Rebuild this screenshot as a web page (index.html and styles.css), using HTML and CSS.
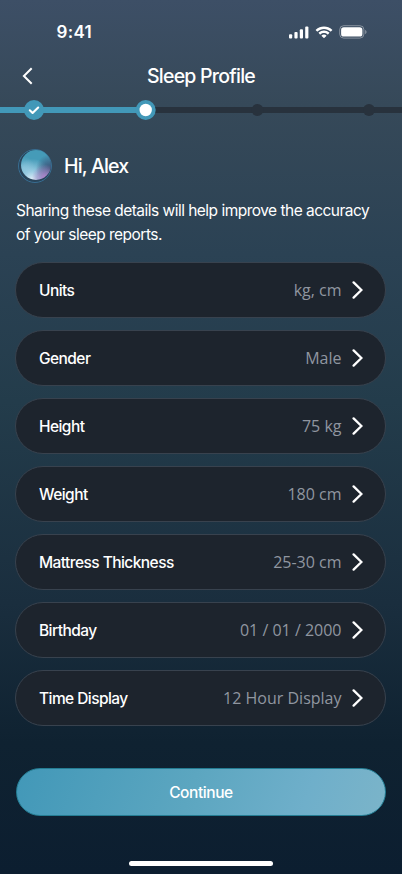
FILE: index.html
```
<!DOCTYPE html>
<html lang="en">
<head>
<meta charset="utf-8">
<meta name="viewport" content="width=device-width, initial-scale=1">
<title>Sleep Profile</title>
<link rel="stylesheet" href="styles.css">
</head>
<body>
<svg width="0" height="0" class="defs" aria-hidden="true">
  <symbol id="chevron" viewBox="0 0 12 20"><path d="M2.600 2.400 L10.400 10 L2.600 17.600" fill="none" stroke="#fff" stroke-width="2.300" stroke-linecap="round" stroke-linejoin="miter"/></symbol>
</svg>
<main class="screen">
  <div class="status">
    <span class="time">9:41</span>
    <div class="status-icons">
      <svg width="20" height="13" viewBox="0 0 20 13" fill="#fff"><rect x="0" y="8.3" width="3.2" height="4.2" rx="1"/><rect x="5.4" y="6.1" width="3.2" height="6.4" rx="1"/><rect x="10.8" y="3.3" width="3.2" height="9.2" rx="1"/><rect x="16.2" y="0.5" width="3.2" height="12" rx="1"/></svg>
      <svg width="18" height="13" viewBox="0 0 18 13" fill="#fff"><path d="M9 3C11.4 3 13.7 3.9 15.4 5.5C15.6 5.6 15.8 5.6 15.9 5.5L17.2 4.2C17.3 4 17.3 3.8 17.2 3.7C12.6-.7 5.4-.7.8 3.7C.7 3.8.7 4 .8 4.2L2.1 5.5C2.2 5.6 2.4 5.6 2.6 5.5C4.3 3.9 6.6 3 9 3Z"/><path d="M9 7.1C10.3 7.1 11.5 7.6 12.5 8.4C12.6 8.6 12.8 8.6 13 8.4L14.3 7.1C14.4 7 14.4 6.8 14.3 6.6C11.3 3.8 6.7 3.8 3.7 6.6C3.6 6.8 3.6 7 3.7 7.1L5 8.4C5.2 8.6 5.4 8.6 5.5 8.4C6.5 7.6 7.7 7.1 9 7.1Z"/><path d="M11.4 9.9C11.5 9.8 11.5 9.6 11.4 9.5C10 8.3 8 8.3 6.6 9.5C6.5 9.6 6.5 9.8 6.6 9.9L8.8 12.1C8.9 12.2 9.1 12.2 9.2 12.1Z"/></svg>
      <svg width="28" height="14" viewBox="0 0 28 14"><rect x=".7" y=".7" width="24.2" height="12.4" rx="4" fill="none" stroke="#fff" stroke-opacity=".38"/><path d="M26.2 5v4c.8-.3 1.3-1.1 1.3-2s-.5-1.700-1.300-2Z" fill="#fff" fill-opacity=".42"/><rect x="2.1" y="2.200" width="21.300" height="9.400" rx="2.700" fill="#fff"/></svg>
    </div>
  </div>
  <header class="header">
    <svg class="back" width="12" height="20" viewBox="0 0 12 20"><path d="M9.700 2.200 L1.900 10 L9.700 17.800" fill="none" stroke="#fff" stroke-width="2"/></svg>
    <h1>Sleep Profile</h1>
  </header>
  <svg class="progress" width="402" height="20" viewBox="0 0 402 20">
    <rect y="7" width="402" height="6" fill="#28323d"/>
    <circle cx="257.500" cy="10" r="6" fill="#28323d"/><circle cx="369" cy="10" r="6" fill="#28323d"/>
    <rect y="7" width="146" height="6" fill="#4298b8"/>
    <circle cx="34" cy="10" r="10" fill="#4298b8"/><circle cx="145.700" cy="10" r="10" fill="#4298b8"/>
    <circle cx="145.700" cy="10" r="6.200" fill="#fff"/>
    <path d="M29.800 10.300 L32.600 13 L38.200 7.500" fill="none" stroke="#fff" stroke-width="2.100" stroke-linecap="round" stroke-linejoin="round"/>
  </svg>
  <section class="greeting">
    <div class="avatar"><div class="orb"></div></div>
    <h2>Hi, Alex</h2>
  </section>
  <p class="intro">Sharing these details will help improve the accuracy<br>of your sleep reports.</p>
  <div class="rows">
    <div class="row"><span class="label">Units</span><span class="value">kg, cm</span><svg class="chev"><use href="#chevron"/></svg></div>
    <div class="row"><span class="label">Gender</span><span class="value">Male</span><svg class="chev"><use href="#chevron"/></svg></div>
    <div class="row"><span class="label">Height</span><span class="value">75 kg</span><svg class="chev"><use href="#chevron"/></svg></div>
    <div class="row"><span class="label">Weight</span><span class="value">180 cm</span><svg class="chev"><use href="#chevron"/></svg></div>
    <div class="row"><span class="label">Mattress Thickness</span><span class="value">25-30 cm</span><svg class="chev"><use href="#chevron"/></svg></div>
    <div class="row"><span class="label">Birthday</span><span class="value">01 / 01 / 2000</span><svg class="chev"><use href="#chevron"/></svg></div>
    <div class="row"><span class="label">Time Display</span><span class="value">12 Hour Display</span><svg class="chev"><use href="#chevron"/></svg></div>
  </div>
  <button class="continue">Continue</button>
  <div class="home"></div>
</main>
</body>
</html>
```
FILE: styles.css
```
* { box-sizing: border-box; }
body { margin: 0; }
.defs { display: none; }
.screen {
  width: 402px;
  height: 874px;
  overflow: hidden;
  display: flex;
  flex-direction: column;
  color: #fff;
  font-family: Inter, "Liberation Sans", sans-serif;
  background: linear-gradient(180deg, #3d4f66 0%, #364959 12%, #2b4254 29%, #233c4b 46%, #1a2e3e 69%, #0f2231 85%, #0c1e30 100%);
}
.status {
  height: 52px;
  padding: 12px 35px 0 56.500px;
  display: flex;
  justify-content: space-between;
  align-items: center;
}
.time { font-size: 17px; font-weight: 600; letter-spacing: 0.300px; }
.status-icons { display: flex; align-items: center; gap: 6px; }
.status-icons svg { display: block; }
.header {
  height: 48px;
  padding: 0 22px;
  display: grid;
  grid-template-columns: 12px 1fr 12px;
  align-items: center;
}
h1 { margin: 0; text-align: center; font-size: 19.500px; font-weight: 450; letter-spacing: -0.750px; }
.progress { display: block; flex: none; }
.greeting { display: flex; align-items: center; gap: 12px; height: 36px; margin: 28px 0 0 18px; }
.avatar {
  width: 34px;
  height: 34px;
  border-radius: 50%;
  border: 1px solid #386d91;
  padding: 0 0 2px 2px;
  background: #29445a;
}
.orb {
  width: 30px;
  height: 30px;
  border-radius: 50%;
  background:
    radial-gradient(circle at 80% 92%, rgba(180, 130, 205, .95) 0, rgba(156, 128, 190, .5) 22%, transparent 36%),
    radial-gradient(circle at 98% 62%, #3c5277 0, rgba(62, 90, 127, .65) 20%, transparent 42%),
    radial-gradient(circle at 38% 100%, #e4effa 0, rgba(160, 208, 230, .9) 25%, transparent 60%),
    radial-gradient(circle at 8% 60%, rgba(140, 200, 222, .7) 0, transparent 35%),
    #459bb8;
}
h2 { margin: 0; font-size: 19.500px; font-weight: 450; letter-spacing: -0.850px; }
.intro { margin: 15px 16px 0; font-size: 15.500px; line-height: 24px; letter-spacing: -0.520px; white-space: nowrap; }
.rows { display: grid; gap: 12px; margin: 15px 16px 0 15px; }
.row {
  height: 56px;
  padding: 0 22px 0 23px;
  border: 1px solid #38424e;
  border-radius: 28px;
  background: #1d242d;
  display: flex;
  align-items: center;
}
.label { flex: 1; font-size: 15.500px; font-weight: 500; letter-spacing: -0.560px; }
.value { font-family: "Open Sans", "Noto Sans", sans-serif; font-size: 16px; font-weight: 400; color: #9096a0; }
.chev { width: 12px; height: 20px; margin-left: 9.500px; }
.continue {
  height: 48px;
  margin: 42px 16px 0;
  flex: none;
  border: 1px solid #247d93;
  border-radius: 24px;
  color: #fff;
  background: linear-gradient(110deg, #4298b8, #5ca6c0 47%, #6fafca 78%, #7bb4c9);
  font: 450 15.500px Inter, "Liberation Sans", sans-serif;
  letter-spacing: -0.420px;
}
.home { width: 144px; height: 5px; margin: 45px auto 0; border-radius: 3px; background: #fff; flex: none; }
```
